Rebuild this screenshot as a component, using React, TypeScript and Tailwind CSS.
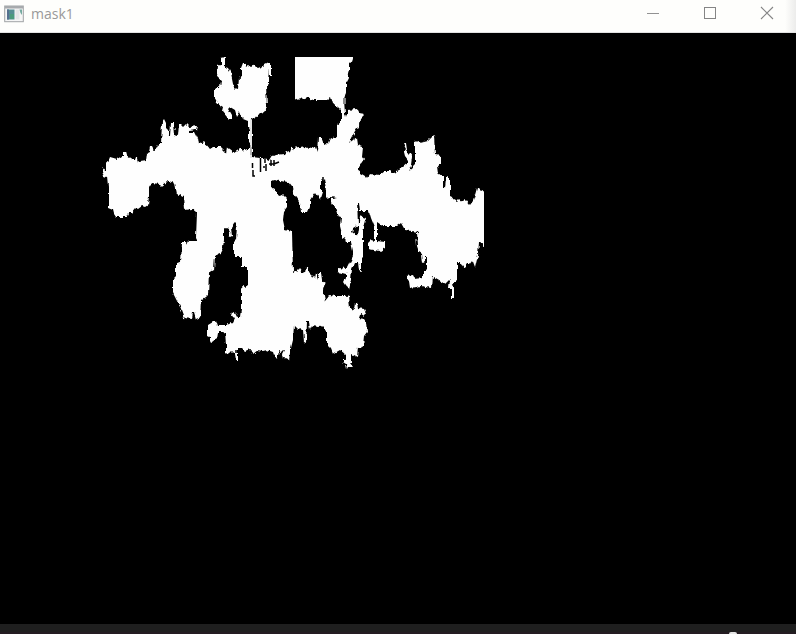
const BODY =
  'M102 167 L106 172 106 163 108 162 110 157 117 159 122 156 124 156 124 152 126 152 127 156 133 160 135 160 136 157 138 157 139 162 146 161 147 153 149 152 150 147 152 147 154 151 158 144 161 144 162 122 164 119 166 123 166 128 168 130 169 136 170 136 171 123 174 123 175 135 178 136 179 124 181 124 184 127 187 124 190 127 198 126 197 130 189 131 189 133 195 133 197 137 198 144 201 144 204 142 210 149 213 147 220 147 223 150 226 153 227 147 230 149 234 152 237 150 240 148 243 151 247 149 250 149 250 144 249 143 249 130 248 128 248 121 243 119 240 112 237 117 235 110 230 107 228 109 232 116 232 119 229 119 227 117 222 111 223 107 217 103 216 100 214 97 214 87 216 88 220 88 221 80 217 77 218 66 220 65 220 58 225 57 225 67 228 68 231 74 233 84 235 88 238 89 239 77 241 76 241 68 243 63 245 63 246 67 253 65 258 68 265 65 269 63 271 63 271 76 269 76 269 68 268 84 266 85 267 107 263 112 258 115 255 119 252 118 252 157 260 158 265 158 269 160 271 157 275 155 285 154 287 151 291 153 293 148 305 146 309 148 312 146 316 147 318 152 319 137 321 137 323 142 325 145 329 143 331 138 333 139 337 136 337 125 341 122 341 110 338 107 333 104 331 97 327 100 313 100 308 97 298 100 295 98 295 57 353 57 352 61 349 63 349 69 347 72 348 78 346 82 346 92 344 99 345 113 346 117 348 110 357 109 359 113 365 114 360 119 359 125 355 131 349 143 353 140 354 137 357 138 358 145 363 147 362 157 364 160 360 166 356 170 360 173 365 176 367 179 370 174 380 175 385 171 390 171 395 174 397 170 403 167 408 163 408 160 405 156 404 152 406 149 403 143 406 143 407 150 412 157 411 165 408 171 413 167 415 165 415 142 418 141 420 143 428 141 434 135 435 155 441 156 441 163 437 165 438 173 443 177 443 188 445 188 446 178 448 177 450 177 450 195 452 196 453 199 457 201 459 199 463 202 466 200 470 205 473 201 475 195 477 188 479 188 482 191 484 190 484 248 481 243 479 242 478 255 475 268 472 260 469 264 467 264 464 268 460 262 457 262 457 280 453 283 454 289 454 298 452 298 452 289 449 289 450 279 445 284 440 281 433 277 432 288 421 286 410 288 409 281 406 280 406 276 413 275 415 279 423 278 423 272 427 268 427 256 425 256 425 262 423 263 422 254 419 252 417 246 416 234 419 232 405 230 401 223 397 226 383 226 377 222 377 241 385 242 385 248 380 251 368 249 368 243 371 240 375 241 375 228 371 218 369 211 360 211 359 202 357 202 358 225 353 228 352 232 357 236 360 216 366 218 363 233 363 257 361 259 361 272 359 271 358 262 355 262 352 269 351 280 349 289 346 285 344 282 346 278 346 274 342 273 338 272 338 267 347 268 353 256 353 251 351 242 346 242 345 237 342 239 342 235 340 227 341 217 338 216 336 210 332 202 332 199 337 198 330 197 326 198 326 190 324 178 322 180 322 193 320 199 317 196 315 193 312 197 310 200 310 207 308 212 301 212 300 202 297 197 293 192 292 187 288 182 280 181 275 179 271 180 271 188 275 190 279 196 283 195 287 199 287 207 284 211 283 220 285 230 292 232 293 272 297 270 299 268 302 272 305 273 306 267 308 267 309 272 312 275 314 278 315 273 317 273 317 279 319 273 321 273 322 281 325 283 323 290 325 301 330 295 335 296 346 296 349 295 350 308 354 310 355 303 357 301 358 308 364 309 366 313 363 316 360 315 359 318 364 319 366 322 367 332 364 336 363 345 361 348 358 348 357 357 351 354 351 360 353 363 350 363 353 367 348 367 347 369 346 364 343 362 343 359 346 359 345 354 340 350 333 354 331 349 327 345 327 330 323 326 319 327 312 326 310 330 309 321 307 321 306 343 304 342 303 330 300 328 298 330 294 326 293 340 291 348 289 360 285 358 283 359 282 354 284 350 281 351 279 350 277 359 274 355 273 352 267 350 263 351 257 350 252 354 250 349 245 351 242 348 238 348 238 360 236 360 235 354 232 351 230 353 226 352 226 345 225 333 223 332 218 332 217 338 212 342 210 341 210 337 208 336 208 325 213 322 216 322 217 325 227 325 233 322 235 318 232 316 233 312 235 313 237 317 240 317 241 310 241 290 243 286 245 287 248 285 248 267 242 267 242 257 234 257 234 242 236 240 237 226 234 223 231 228 232 236 230 237 228 229 224 227 224 240 223 247 220 253 215 255 214 270 209 273 208 295 205 298 202 300 201 317 196 319 194 312 193 312 192 319 184 318 180 307 173 293 173 278 176 275 176 263 181 262 182 242 186 242 187 245 189 241 198 241 196 237 197 213 192 209 184 210 183 197 177 194 175 184 173 180 170 182 167 182 162 186 160 184 152 183 149 188 149 197 148 205 145 207 142 206 138 209 136 208 132 213 129 213 127 217 116 217 114 214 113 210 108 208 108 187 107 177 104 176 102 172Z'

const CRACKS =
  'M252.5 163V168M253 170V176H255 M260.5 158V172M265 158V163M266 164V171M263 167H265M271 160V166M269 164H274L279 162M274 160V166M236 353V350 M251 147V155M323 177V182'

function MinimizeIcon() {
  return (
    <svg className="h-4 w-4" viewBox="0 0 16 16" fill="none" stroke="#929292">
      <path d="M2 8.5H14" />
    </svg>
  )
}

function MaximizeIcon() {
  return (
    <svg className="h-4 w-4" viewBox="0 0 16 16" fill="none" stroke="#858585">
      <rect x="2.5" y="2.5" width="11" height="11" />
    </svg>
  )
}

function CloseIcon() {
  return (
    <svg className="h-4 w-4" viewBox="0 0 16 16" fill="none" stroke="#858585" strokeWidth="1.1">
      <path d="M2 2L14 14M14 2L2 14" />
    </svg>
  )
}

function AppIcon() {
  return (
    <svg className="h-[18px] w-5" viewBox="0 0 20 18">
      <rect x=".7" y="1" width="18.6" height="15.7" fill="#f6f6f6" stroke="#a0a3a6" />
      <rect x="1" y="1" width="18" height="2.5" fill="#a7aaad" />
      <rect x="3" y="4.5" width="7.5" height="10" fill="#558d93" />
      <rect x="3" y="4.5" width="2" height="10" fill="#56718f" />
      <rect x="6" y="9" width="4" height="5" fill="#4b9a7d" />
      <rect x="11.5" y="4.5" width="4" height="10" fill="#e4e5e8" />
      <path d="M15.5 4.5H18V10L16.5 8Z" fill="#75aaa0" />
    </svg>
  )
}

export default function App() {
  return (
    <div className="flex h-[634px] w-[796px] flex-col overflow-hidden bg-black">
      <header className="flex h-[33px] shrink-0 items-start justify-between border-b border-[#e2e2e2] bg-[#fefefc]">
        <div className="flex items-center gap-[7px] pt-[4px] pl-[4px]">
          <AppIcon />
          <span className="font-['Open_Sans',sans-serif] text-[14px] leading-[20px] text-[#999]">mask1</span>
        </div>
        <div className="flex h-full">
          <div className="flex gap-[41px] pt-[5px] pr-[10px]">
            <MinimizeIcon />
            <MaximizeIcon />
            <CloseIcon />
          </div>
          <div className="w-[11px] bg-linear-to-r from-transparent to-[#ececeb]" />
        </div>
      </header>
      <main className="h-[591px] shrink-0 bg-black">
        <svg className="block h-full w-full" viewBox="0 33 796 591">
          <defs>
            <filter id="ragged" x="0" y="33" width="796" height="591" filterUnits="userSpaceOnUse" colorInterpolationFilters="sRGB">
              <feTurbulence type="fractalNoise" baseFrequency="0.3 0.12" numOctaves="2" seed="4" result="noise" />
              <feDisplacementMap in="SourceGraphic" in2="noise" scale="5" xChannelSelector="R" yChannelSelector="G" />
            </filter>
            <clipPath id="extent">
              <rect x="102" y="57" width="382" height="313" />
            </clipPath>
          </defs>
          <g clipPath="url(#extent)">
            <path d={BODY} fill="#fefefe" filter="url(#ragged)" />
            <path d="M292 54H295V100H292Z" fill="#000" />
            <path d="M295 57H353L352 61 349 63V69L346 82V92L344 97H295ZM480 194H484V242H480Z" fill="#fefefe" />
            <path d={CRACKS} fill="none" stroke="#000" strokeWidth="1.5" />
            <path d="M251 119V158" stroke="#ddd" strokeWidth="1.5" />
            <path d="M343 98H346V104H343Z" fill="#888" />
          </g>
        </svg>
      </main>
      <footer className="flex h-[10px] shrink-0 items-end border-b-2 border-[#241c22] bg-[#1f1f1f] pl-[729px]">
        <div className="-mb-[2px] h-[2px] w-[8px] rounded-t-full bg-[#e5e5e5]" />
      </footer>
    </div>
  )
}
